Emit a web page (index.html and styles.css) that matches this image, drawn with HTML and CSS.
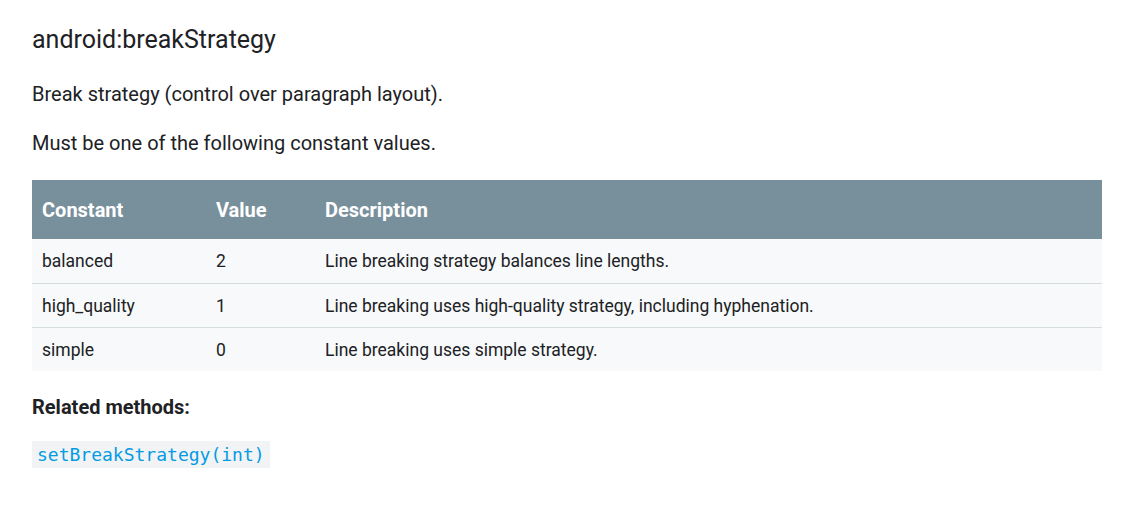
FILE: index.html
```html
<!DOCTYPE html>
<html lang="en">
<head>
    <meta charset="UTF-8">
    <meta name="viewport" content="width=device-width, initial-scale=1.0">
    <title>android:breakStrategy</title>
    <link rel="stylesheet" href="styles.css">
</head>
<body>
    <div class="attr">
        <h3>android:breakStrategy</h3>
        <p>Break strategy (control over paragraph layout).</p>
        <p>Must be one of the following constant values.</p>
        <table class="constants">
            <thead>
                <tr>
                    <th class="col-const">Constant</th>
                    <th class="col-value">Value</th>
                    <th>Description</th>
                </tr>
            </thead>
            <tbody>
                <tr>
                    <td>balanced</td>
                    <td>2</td>
                    <td>Line breaking strategy balances line lengths.</td>
                </tr>
                <tr>
                    <td>high_quality</td>
                    <td>1</td>
                    <td>Line breaking uses high-quality strategy, including hyphenation.</td>
                </tr>
                <tr>
                    <td>simple</td>
                    <td>0</td>
                    <td>Line breaking uses simple strategy.</td>
                </tr>
            </tbody>
        </table>
        <p class="related">Related methods:</p>
        <ul class="methods">
            <li><a href="#"><code>setBreakStrategy(int)</code></a></li>
        </ul>
    </div>
</body>
</html>
```
FILE: styles.css
```css
/* General */
body {
    margin: 0;
    padding: 0;
    background: #fff;
    font-family: Roboto, "Noto Sans", sans-serif;
    color: #202124;
}

.attr {
    padding: 23px 34px 0 32px;
}

h3 {
    margin: 0 0 21px;
    font-size: 25px;
    font-weight: 400;
    line-height: 34px;
}

p {
    margin: 0 0 17px;
    font-size: 20px;
    line-height: 32px;
}

/* Constants table */
.constants {
    width: 100%;
    border-collapse: collapse;
    margin: 21px 0 20px;
    font-size: 17.5px;
}

.constants th {
    background-color: #78909c;
    color: #fff;
    font-weight: 700;
    text-align: left;
    height: 59px;
    padding: 0 10px;
    font-size: 20px;
}

.constants td {
    background-color: #f7f9fa;
    height: 43px;
    padding: 0 10px;
    border-top: 1px solid #d5dde1;
}

.constants tbody tr:first-child td {
    border-top: none;
    height: 44px;
}

.col-const {
    width: 154px;
}

.col-value {
    width: 89px;
}

/* Related methods */
.related {
    font-weight: 700;
    margin-bottom: 18px;
}

.methods {
    list-style: none;
    margin: 0;
    padding: 0;
}

.methods a {
    text-decoration: none;
}

.methods code {
    display: inline-block;
    background: #f1f3f4;
    color: #039be5;
    font-family: "DejaVu Sans Mono", monospace;
    font-size: 18px;
    padding: 3px 5px 2px;
    line-height: 22px;
}
```
